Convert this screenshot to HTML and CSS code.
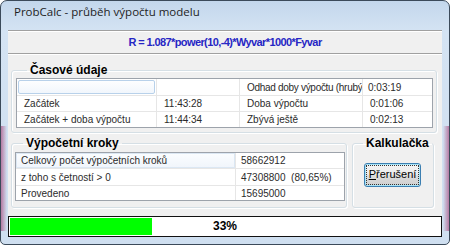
FILE: index.html
```html
<!DOCTYPE html>
<html lang="cs">
<head>
    <meta charset="UTF-8">
    <title>ProbCalc - průběh výpočtu modelu</title>
    <link rel="stylesheet" href="styles.css">
</head>
<body>
    <div class="window">
        <div class="titlebar">ProbCalc - průběh výpočtu modelu</div>

        <div class="client">
            <div class="formula">R = 1.087*power(10,-4)*Wyvar*1000*Fyvar</div>

            <fieldset class="group group-time">
                <legend>Časové údaje</legend>
                <div class="list list-time">
                    <div class="row">
                        <div class="cell"><div class="hot"></div></div>
                        <div class="cell"></div>
                        <div class="cell"><span class="tight">Odhad doby výpočtu (hrubý</span></div>
                        <div class="cell">0:03:19</div>
                    </div>
                    <div class="row">
                        <div class="cell">Začátek</div>
                        <div class="cell">11:43:28</div>
                        <div class="cell">Doba výpočtu</div>
                        <div class="cell">0:01:06</div>
                    </div>
                    <div class="row">
                        <div class="cell">Začátek + doba výpočtu</div>
                        <div class="cell">11:44:34</div>
                        <div class="cell">Zbývá ještě</div>
                        <div class="cell">0:02:13</div>
                    </div>
                </div>
            </fieldset>

            <div class="lower">
                <fieldset class="group group-steps">
                    <legend>Výpočetní kroky</legend>
                    <div class="list list-steps">
                        <div class="row">
                            <div class="cell hot-cell">Celkový počet výpočetních kroků</div>
                            <div class="cell">58662912</div>
                        </div>
                        <div class="row">
                            <div class="cell">z toho s četností &gt; 0</div>
                            <div class="cell">47308800 &nbsp;(80,65%)</div>
                        </div>
                        <div class="row">
                            <div class="cell">Provedeno</div>
                            <div class="cell">15695000</div>
                        </div>
                    </div>
                </fieldset>

                <fieldset class="group group-calc">
                    <legend>Kalkulačka</legend>
                    <button class="btn"><span class="focus"><u>P</u>řerušení</span></button>
                </fieldset>
            </div>

            <div class="progress">
                <div class="progress-fill" style="width: 33%"></div>
                <span class="progress-text">33%</span>
            </div>
        </div>
    </div>
</body>
</html>
```

FILE: styles.css
```css
html, body {
    margin: 0;
    padding: 0;
    background: #fff;
}
body {
    width: 450px;
    height: 245px;
    overflow: hidden;
    font-family: "Liberation Sans", Arial, sans-serif;
}

/* window frame */
.window {
    box-sizing: border-box;
    width: 450px;
    height: 245px;
    border: 1px solid #3b4a5a;
    border-radius: 7px 7px 5px 5px;
    padding: 0 7px 7px 7px;
    background:
        linear-gradient(to right, rgba(160, 40, 100, .55), rgba(160, 40, 100, 0) 6px, rgba(160, 40, 100, 0) calc(100% - 6px), rgba(160, 40, 100, .55)) 0 125px / 100% 105px no-repeat,
        linear-gradient(#c3d7ec, #d4e3f3 30px, #cfdff0);
    display: flex;
    flex-direction: column;
}
.titlebar {
    height: 29px;
    line-height: 22px;
    padding-left: 6px;
    font-family: "Open Sans", "Noto Sans", sans-serif;
    font-size: 11.5px;
    color: #1e1e1e;
}
.client {
    flex: 1;
    background: #f0f0f0;
    display: flex;
    flex-direction: column;
}

/* formula line */
.formula {
    box-sizing: border-box;
    height: 24px;
    border-top: 1px solid #a0a0a0;
    border-bottom: 1px solid #a0a0a0;
    box-shadow: inset 0 1px 0 #fff, 0 1px 0 #fff;
    text-align: center;
    line-height: 22px;
    font-size: 11px;
    font-weight: bold;
    letter-spacing: -0.6px;
    color: #2626c4;
}

/* group boxes */
.group {
    margin: 0;
    border: 1px solid #d5dfe5;
    border-radius: 3px;
    box-shadow: inset 1px 1px 0 #fff, 1px 1px 0 #fff;
    min-width: 0;
}
.group legend {
    padding: 0 3px;
    font-size: 12px;
    font-weight: bold;
    line-height: 14px;
    color: #000;
}
.group-time {
    margin: 9px 5px 0 3px;
    padding: 1px 3px 4px 4px;
}
.group-time legend {
    margin-left: 11px;
}
.lower {
    display: flex;
    gap: 5px;
    margin: 3px 8px 0 3px;
}
.group-steps {
    flex: 1;
    padding: 2px 1px 6px 3px;
}
.group-steps legend {
    margin-left: 8px;
}
.group-calc {
    width: 82px;
    box-sizing: border-box;
    padding: 0;
}
.group-calc legend {
    margin-left: 10px;
}

/* list views */
.list {
    background: #fff;
    border: 1px solid #9da3ab;
    font-size: 10px;
    color: #2b2b2b;
}
.row {
    display: grid;
    border-bottom: 1px solid #e6e6e6;
}
.row:last-child {
    border-bottom: none;
}
.cell {
    border-right: 1px solid #e6e6e6;
    white-space: nowrap;
    overflow: hidden;
    display: flex;
    align-items: center;
    min-width: 0;
}
.cell:last-child {
    border-right: none;
}
.tight {
    letter-spacing: -0.3px;
}
.list-time .row {
    grid-template-columns: 140px 83px 123px 1fr;
}
.list-time .row:nth-child(1) { height: 16px; }
.list-time .row:nth-child(2) { height: 15px; }
.list-time .row:nth-child(3) { height: 15px; }
.list-time .cell {
    padding-left: 7px;
}
.list-time .row:nth-child(1) .cell:first-child {
    padding: 1px;
}
.list-time .row:nth-child(1) .cell:last-child {
    padding-left: 5px;
}
.hot {
    width: 100%;
    height: 100%;
    box-sizing: border-box;
    border: 1px solid #b8d1ea;
    border-radius: 2px;
    background: linear-gradient(#fdfeff, #f1f6fc);
}
.list-steps .row {
    grid-template-columns: 220px 1fr;
}
.list-steps .row:nth-child(1) { height: 15px; }
.list-steps .row:nth-child(2) { height: 16px; }
.list-steps .row:nth-child(3) { height: 14px; }
.list-steps .cell {
    padding-left: 5px;
}
.hot-cell {
    background: linear-gradient(#fbfdff, #f0f5fb);
    box-shadow: inset 0 0 0 1px #dbe7f3;
}

/* button */
.btn {
    display: block;
    margin: 13px 0 0 11px;
    width: 57px;
    height: 24px;
    padding: 2px;
    border: 1px solid #3c7fb1;
    border-radius: 3px;
    background: linear-gradient(#f3f3f3, #ebebeb 50%, #dddddd 50%, #cfcfcf);
    box-shadow: inset 0 0 0 1px #a8e4f8;
    font-family: "Liberation Sans", Arial, sans-serif;
    font-size: 11px;
    color: #000;
}
.btn .focus {
    display: block;
    height: 100%;
    line-height: 16px;
    outline: 1px dotted #333;
}

/* progress bar */
.progress {
    position: relative;
    margin-top: auto;
    height: 21px;
    box-sizing: border-box;
    border: 1px solid #111;
    padding: 1px;
    background: #fff;
}
.progress-fill {
    height: 100%;
    background: #00ff00;
}
.progress-text {
    position: absolute;
    left: 0;
    right: 0;
    top: 2px;
    text-align: center;
    font-size: 12px;
    font-weight: bold;
    color: #000;
}
```
